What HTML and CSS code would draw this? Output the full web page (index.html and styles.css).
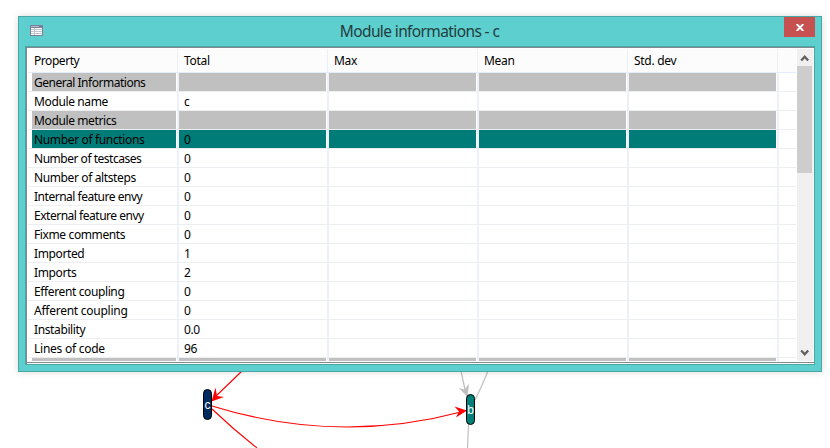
FILE: index.html
```html
<!DOCTYPE html>
<html lang="en">
<head>
<meta charset="utf-8">
<title>Module informations - c</title>
<link rel="stylesheet" href="styles.css">
</head>
<body>
<svg class="graph" width="830" height="448" viewBox="0 0 830 448">
  <g fill="none" stroke="#ff0000" stroke-width="1.1">
    <path d="M242 371L214 398"/>
    <path d="M212 406Q338 445 463 411.500"/>
    <path d="M212 409Q234 430 257 448"/>
  </g>
  <path d="M211.500 401.500l4-14 1.500 8.500 7 1z" fill="#ff0000"/>
  <path d="M467 410.500l-12.500-4 4.500 5-3 6z" fill="#ff0000"/>
  <g fill="none" stroke="#c0c0c0" stroke-width="1.2">
    <path d="M461 371L465.500 392"/>
    <path d="M488 371Q482 386 475 400"/>
    <path d="M468.500 424L467.500 448"/>
  </g>
  <path d="M467.500 397l-8.500-9 5.500 1.500 4.500-6z" fill="#c0c0c0"/>
  <rect x="203.500" y="389.500" width="8" height="30" rx="4" fill="#002b61" stroke="#000"/>
  <rect x="466.500" y="394.500" width="8" height="30" rx="4" fill="#008078" stroke="#000"/>
  <text class="node" x="207.500" y="409">c</text>
  <text class="node" x="470.500" y="414">b</text>
</svg>
<main class="window">
  <header class="titlebar">
    <svg class="app-icon" width="13" height="11" viewBox="0 0 13 11" shape-rendering="crispEdges">
      <path fill="#7c7f9c" d="M0 0h13v11H0z"/>
      <path fill="#b4b8cc" d="M1 1h8v1H1z"/>
      <path fill="#fff" d="M1 3h3v7H1zM5 3h7v7H5z"/>
      <path fill="#c3c6d6" d="M1 4h11v1H1zM1 6h11v1H1zM1 8h11v1H1zM4 3h1v7H4z"/>
    </svg>
    <h1>Module informations - c</h1>
    <button class="close" aria-label="Close"><svg width="8" height="7" viewBox="0 0 8 7"><path d="M.7 0L7.300 7M7.300 0L.7 7" stroke="#fff" stroke-width="1.900"/></svg></button>
  </header>
  <section class="frame">
    <div class="table">
      <div class="row head"><span>Property</span><span>Total</span><span>Max</span><span>Mean</span><span>Std. dev</span><span></span></div>
      <div class="row group"><span class="tight">General Informations</span><span></span><span></span><span></span><span></span><span></span></div>
      <div class="row"><span>Module name</span><span>c</span><span></span><span></span><span></span><span></span></div>
      <div class="row group"><span>Module metrics</span><span></span><span></span><span></span><span></span><span></span></div>
      <div class="row selected"><span>Number of functions</span><span>0</span><span></span><span></span><span></span><span></span></div>
      <div class="row"><span class="tight">Number of testcases</span><span>0</span><span></span><span></span><span></span><span></span></div>
      <div class="row"><span>Number of altsteps</span><span>0</span><span></span><span></span><span></span><span></span></div>
      <div class="row"><span class="tight">Internal feature envy</span><span>0</span><span></span><span></span><span></span><span></span></div>
      <div class="row"><span class="tight">External feature envy</span><span>0</span><span></span><span></span><span></span><span></span></div>
      <div class="row"><span>Fixme comments</span><span>0</span><span></span><span></span><span></span><span></span></div>
      <div class="row"><span>Imported</span><span>1</span><span></span><span></span><span></span><span></span></div>
      <div class="row"><span>Imports</span><span>2</span><span></span><span></span><span></span><span></span></div>
      <div class="row"><span>Efferent coupling</span><span>0</span><span></span><span></span><span></span><span></span></div>
      <div class="row"><span class="loose">Afferent coupling</span><span>0</span><span></span><span></span><span></span><span></span></div>
      <div class="row"><span>Instability</span><span>0.0</span><span></span><span></span><span></span><span></span></div>
      <div class="row"><span class="loose">Lines of code</span><span>96</span><span></span><span></span><span></span><span></span></div>
      <div class="row group"><span></span><span></span><span></span><span></span><span></span><span></span></div>
    </div>
    <div class="scrollbar">
      <svg width="16" height="17" viewBox="0 0 16 17"><path d="M4.200 11.500L7.700 7.700l3.500 3.800" fill="none" stroke="#606060" stroke-width="2.300"/></svg>
      <div class="thumb"></div>
      <svg class="down" width="16" height="17" viewBox="0 0 16 17"><path d="M4.200 6.500l3.500 3.800 3.500-3.800" fill="none" stroke="#606060" stroke-width="2.300"/></svg>
    </div>
  </section>
</main>
</body>
</html>
```
FILE: styles.css
```css
* { box-sizing: border-box; }
body {
  margin: 0;
  width: 830px;
  height: 448px;
  overflow: hidden;
  background: #fff;
  color: #000;
  font: 12px/20px "Noto Sans", "Open Sans", sans-serif;
}
.graph { position: absolute; left: 0; top: 0; }
.node {
  fill: #fff;
  font: 12px "Liberation Sans", sans-serif;
  text-anchor: middle;
}
.window {
  position: relative;
  width: 804px;
  height: 356px;
  margin: 16px 0 0 18px;
  padding: 0 6px 6px;
  border: 1px solid #4aa5a5;
  background: #5dcfcf;
  box-shadow: 0 0 7px rgba(0, 0, 0, .15);
}
.titlebar {
  display: flex;
  justify-content: space-between;
  height: 29px;
}
.app-icon { margin: 8px 0 0 5px; flex: none; }
h1 {
  margin: 0 0 0 12px;
  color: #243d3d;
  font-size: 15.5px;
  font-weight: 400;
  line-height: 28px;
  letter-spacing: -.62px;
}
.close {
  width: 31px;
  height: 20px;
  padding: 0;
  border: 0;
  background: #c75050;
  display: flex;
  align-items: center;
  justify-content: center;
}
.frame {
  display: flex;
  width: 790px;
  height: 319px;
  padding: 1px 0 0 1px;
  border: 1px solid #4aa5a5;
  background: #fff;
  box-shadow: inset 1px 1px #808890, inset 0 -1px #fff, inset 0 -2px #808890;
}
.table {
  width: 770px;
  height: 313px;
  padding: 1px 0 0 1px;
  overflow: hidden;
}
.row {
  display: grid;
  grid-template-columns: 149px 150px 150px 150px 150px 18px;
  height: 19px;
  width: 768px;
  border-bottom: 1px solid #edeef1;
}
.row span {
  height: 19px;
  padding-left: 7px;
  border-right: 2px solid #edf0f6;
  white-space: nowrap;
  letter-spacing: -.38px;
}
.row .tight { letter-spacing: -.48px; }
.row .loose { letter-spacing: -.25px; }
.row span:first-child { width: 151px; padding-left: 6px; }
.row span:nth-child(n+2) { margin-left: 2px; width: 150px; padding-left: 5px; }
.row span:nth-child(6) { width: 16px; border: 0; }
.head { height: 24px; background: #fcfcfc; border-color: #e4edfa; line-height: 24px; }
.row.head span { height: 23px; border-right-width: 1px; letter-spacing: -.3px; }
.row.head span:first-child { width: 150px; letter-spacing: -.45px; }
.row.head span:nth-child(n+2):nth-child(-n+5) { width: 149px; }
.row.head span:last-child { border: 0; }
.group span:not(:last-child), .selected span:not(:last-child) {
  height: 18px;
  background: linear-gradient(#c0c0c0, #c0c0c0) 0 0 / calc(100% - 1px) 100% no-repeat;
}
.group span:first-child, .selected span:first-child { background-position: 4px 0; background-size: 144px 100%; }
.selected span:not(:last-child) { background-image: linear-gradient(#007c78, #007c78); }
.row.selected span:first-child { letter-spacing: -.35px; }
.scrollbar {
  display: flex;
  flex-direction: column;
  width: 16px;
  height: 312px;
  margin-top: 1px;
  background: #f0f0f0;
}
.scrollbar svg { flex: none; }
.thumb { width: 15px; height: 107px; background: #cdcdcd; }
.down { margin-top: auto; }
```
